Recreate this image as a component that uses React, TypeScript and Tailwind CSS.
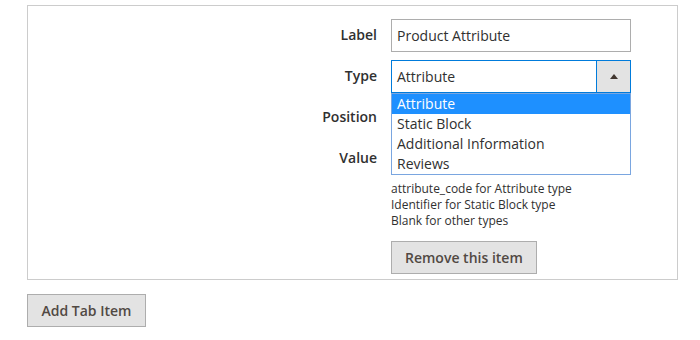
const options = ["Attribute", "Static Block", "Additional Information", "Reviews"];

function Row({ label, children }: { label: string; children: React.ReactNode }) {
  return (
    <div className="flex items-center">
      <div className="w-[363px] pr-[14px] pb-[2px] text-right text-[14px] font-semibold text-[#303030]">{label}</div>
      <div className="relative w-[240px]">{children}</div>
    </div>
  );
}

export default function App() {
  return (
    <div className="w-[700px] h-[340px] bg-white pt-[5px] pl-[27px] font-['Open_Sans',sans-serif]">
      <div className="w-[651px] h-[275px] border border-[#cccccc] pt-[13px] flex flex-col">
        <div className="flex flex-col gap-[8px]">
          <Row label="Label">
            <div className="h-[33px] border border-[#adadad] px-[5px] flex items-center text-[14px] text-[#303030]">
              Product Attribute
            </div>
          </Row>
          <Row label="Type">
            <div className="h-[33px] border border-[#007bdb] flex text-[14px] text-[#303030]">
              <div className="flex-1 flex items-center px-[5px]">Attribute</div>
              <div className="w-[34px] bg-[#e3e3e3] border-l border-[#007bdb] flex items-center justify-center">
                <svg width="8" height="5" viewBox="0 0 8 5">
                  <path d="M0 5 L4 0 L8 5 Z" fill="#41362f" />
                </svg>
              </div>
            </div>
            <div className="absolute left-0 top-[33px] w-[240px] z-10 bg-white border border-[#7aa6e0] text-[14px] text-[#303030] leading-[20px]">
              {options.map((o, i) => (
                <div key={o} className={i === 0 ? "bg-[#1e90ff] text-white px-[5px]" : "px-[5px]"}>
                  {o}
                </div>
              ))}
            </div>
          </Row>
          <Row label="Position">
            <div className="h-[33px] border border-[#adadad]" />
          </Row>
          <Row label="Value">
            <div className="h-[33px] border border-[#adadad]" />
          </Row>
        </div>
        <div className="ml-[363px] mt-[6px] text-[12px] leading-[16px] text-[#303030]">
          <div>attribute_code for Attribute type</div>
          <div>Identifier for Static Block type</div>
          <div>Blank for other types</div>
        </div>
        <div className="ml-[363px] mt-[12px]">
          <button className="h-[33px] px-[13px] bg-[#e3e3e3] border border-[#adadad] text-[14px] font-semibold text-[#514943]">
            Remove this item
          </button>
        </div>
      </div>
      <button className="mt-[14px] h-[33px] w-[119px] bg-[#e3e3e3] border border-[#adadad] text-[14px] font-semibold text-[#514943]">
        Add Tab Item
      </button>
    </div>
  );
}
